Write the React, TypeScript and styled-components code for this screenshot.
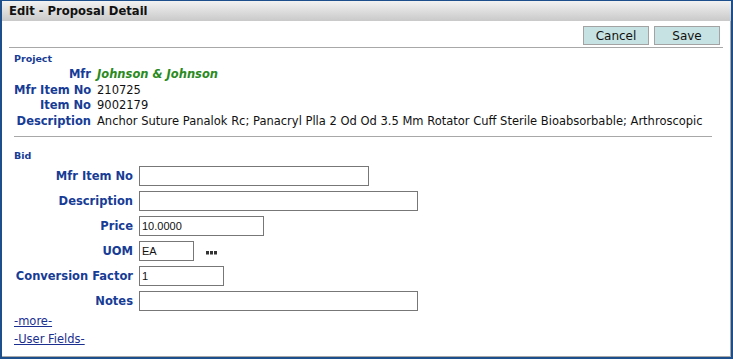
import React from 'react';
import styled, { createGlobalStyle } from "styled-components";

const GlobalStyle = createGlobalStyle`
  html, body {
    margin: 0;
    padding: 0;
    background: #ffffff;
  }
  body {
    font-family: "DejaVu Sans", Verdana, sans-serif;
  }
`;

const projectRows = [
  { label: "Mfr", value: "Johnson & Johnson", mfr: true },
  { label: "Mfr Item No", value: "210725" },
  { label: "Item No", value: "9002179" },
  { label: "Description", value: "Anchor Suture Panalok Rc; Panacryl Plla 2 Od Od 3.5 Mm Rotator Cuff Sterile Bioabsorbable; Arthroscopic" },
];

const bidRows = [
  { label: "Mfr Item No", value: "", width: 230 },
  { label: "Description", value: "", width: 279 },
  { label: "Price", value: "10.0000", width: 125 },
  { label: "UOM", value: "EA", width: 55, lookup: true },
  { label: "Conversion Factor", value: "1", width: 85 },
  { label: "Notes", value: "", width: 279 },
];

const App = () => {
  return (
    <>
      <GlobalStyle />
      <Window>
        <TitleBar>Edit - Proposal Detail</TitleBar>
        <Content>
          <Toolbar>
            <Button>Cancel</Button>
            <Button>Save</Button>
          </Toolbar>

          <Section>
            <Heading>Project</Heading>
            <InfoGrid>
              {projectRows.map((r) => (
                <React.Fragment key={r.label}>
                  <Label>{r.label}</Label>
                  <Value $mfr={r.mfr}>{r.value}</Value>
                </React.Fragment>
              ))}
            </InfoGrid>
          </Section>

          <Divider />

          <BidSection>
            <Heading>Bid</Heading>
            <FormGrid>
              {bidRows.map((r) => (
                <React.Fragment key={r.label}>
                  <FormLabel>{r.label}</FormLabel>
                  <Field>
                    <Input $w={r.width} defaultValue={r.value} />
                    {r.lookup && (
                      <Lookup width="11" height="4" viewBox="0 0 11 4">
                        <rect x="0" y="0" width="3" height="3.5" fill="#333" />
                        <rect x="4" y="0" width="3" height="3.5" fill="#333" />
                        <rect x="8" y="0" width="3" height="3.5" fill="#333" />
                      </Lookup>
                    )}
                  </Field>
                </React.Fragment>
              ))}
            </FormGrid>
            <Links>
              <LinkText>-more-</LinkText>
              <LinkText>-User Fields-</LinkText>
            </Links>
          </BidSection>
        </Content>
      </Window>
    </>
  )
}

export default App;

const Window = styled.div`
    width: 733px;
    height: 359px;
    box-sizing: border-box;
    border: 2px solid #1d4f8c;
    border-top-width: 1px;
    display: flex;
    flex-direction: column;
    background: #ffffff;
`;
const TitleBar = styled.div`
    height: 20px;
    line-height: 21px;
    padding-left: 7px;
    font-size: 11.6px;
    font-weight: bold;
    color: #111;
    background: linear-gradient(#f2f2f2, #c9c9c9);
`;
const Content = styled.div`
    flex: 1;
    border-right: 1px solid #a9a9a9;
    border-bottom: 1px solid #a9a9a9;
    display: flex;
    flex-direction: column;
`;
const Toolbar = styled.div`
    display: flex;
    justify-content: flex-end;
    gap: 5px;
    margin: 5px 7px 0 7px;
    padding: 0 3px 2px 0;
    border-bottom: 1px solid #a8a8a8;
`;
const Button = styled.button`
    width: 66px;
    height: 19px;
    padding: 0;
    background: #c7e2e2;
    border: 1px solid #a3a3a3;
    font-family: "DejaVu Sans", Tahoma, sans-serif;
    font-size: 12px;
    color: #111;
`;
const Section = styled.div`
    padding: 4px 0 0 12px;
`;
const BidSection = styled(Section)`
    padding-top: 12px;
`;
const Heading = styled.div`
    font-size: 9.5px;
    font-weight: bold;
    color: #173c96;
    line-height: 13px;
`;
const InfoGrid = styled.div`
    display: grid;
    grid-template-columns: 77px auto;
    column-gap: 6px;
    margin-top: 2px;
    font-size: 11.5px;
    line-height: 15.6px;
`;
const Label = styled.div`
    text-align: right;
    font-weight: bold;
    color: #173c96;
    white-space: nowrap;
`;
const Value = styled.div<{ $mfr?: boolean }>`
    color: ${(p) => (p.$mfr ? "#2a8a1e" : "#111")};
    font-weight: ${(p) => (p.$mfr ? "bold" : "normal")};
    font-style: ${(p) => (p.$mfr ? "italic" : "normal")};
    white-space: nowrap;
`;
const Divider = styled.div`
    height: 1px;
    background: #a8a8a8;
    margin: 7px 18px 0 12px;
`;
const FormGrid = styled.div`
    display: grid;
    grid-template-columns: 119px auto;
    column-gap: 6px;
    row-gap: 5px;
    margin-top: 4px;
    align-items: center;
`;
const FormLabel = styled.div`
    text-align: right;
    font-size: 11.5px;
    font-weight: bold;
    color: #173c96;
    white-space: nowrap;
`;
const Field = styled.div`
    display: flex;
    align-items: center;
`;
const Input = styled.input<{ $w: number }>`
    width: ${(p) => p.$w}px;
    height: 20px;
    box-sizing: border-box;
    border: 1px solid #777;
    padding: 0 2px;
    margin: 0;
    font-family: "Liberation Sans", Arial, sans-serif;
    font-size: 11px;
    color: #111;
    outline: none;
`;
const Lookup = styled.svg`
    margin-left: 12px;
    margin-top: 3px;
`;
const Links = styled.div`
    display: flex;
    flex-direction: column;
    align-items: flex-start;
    margin-top: 3px;
    gap: 4px;
`;
const LinkText = styled.a`
    font-size: 11.5px;
    line-height: 14px;
    color: #1a2f8f;
    text-decoration: underline;
    cursor: pointer;
`;
